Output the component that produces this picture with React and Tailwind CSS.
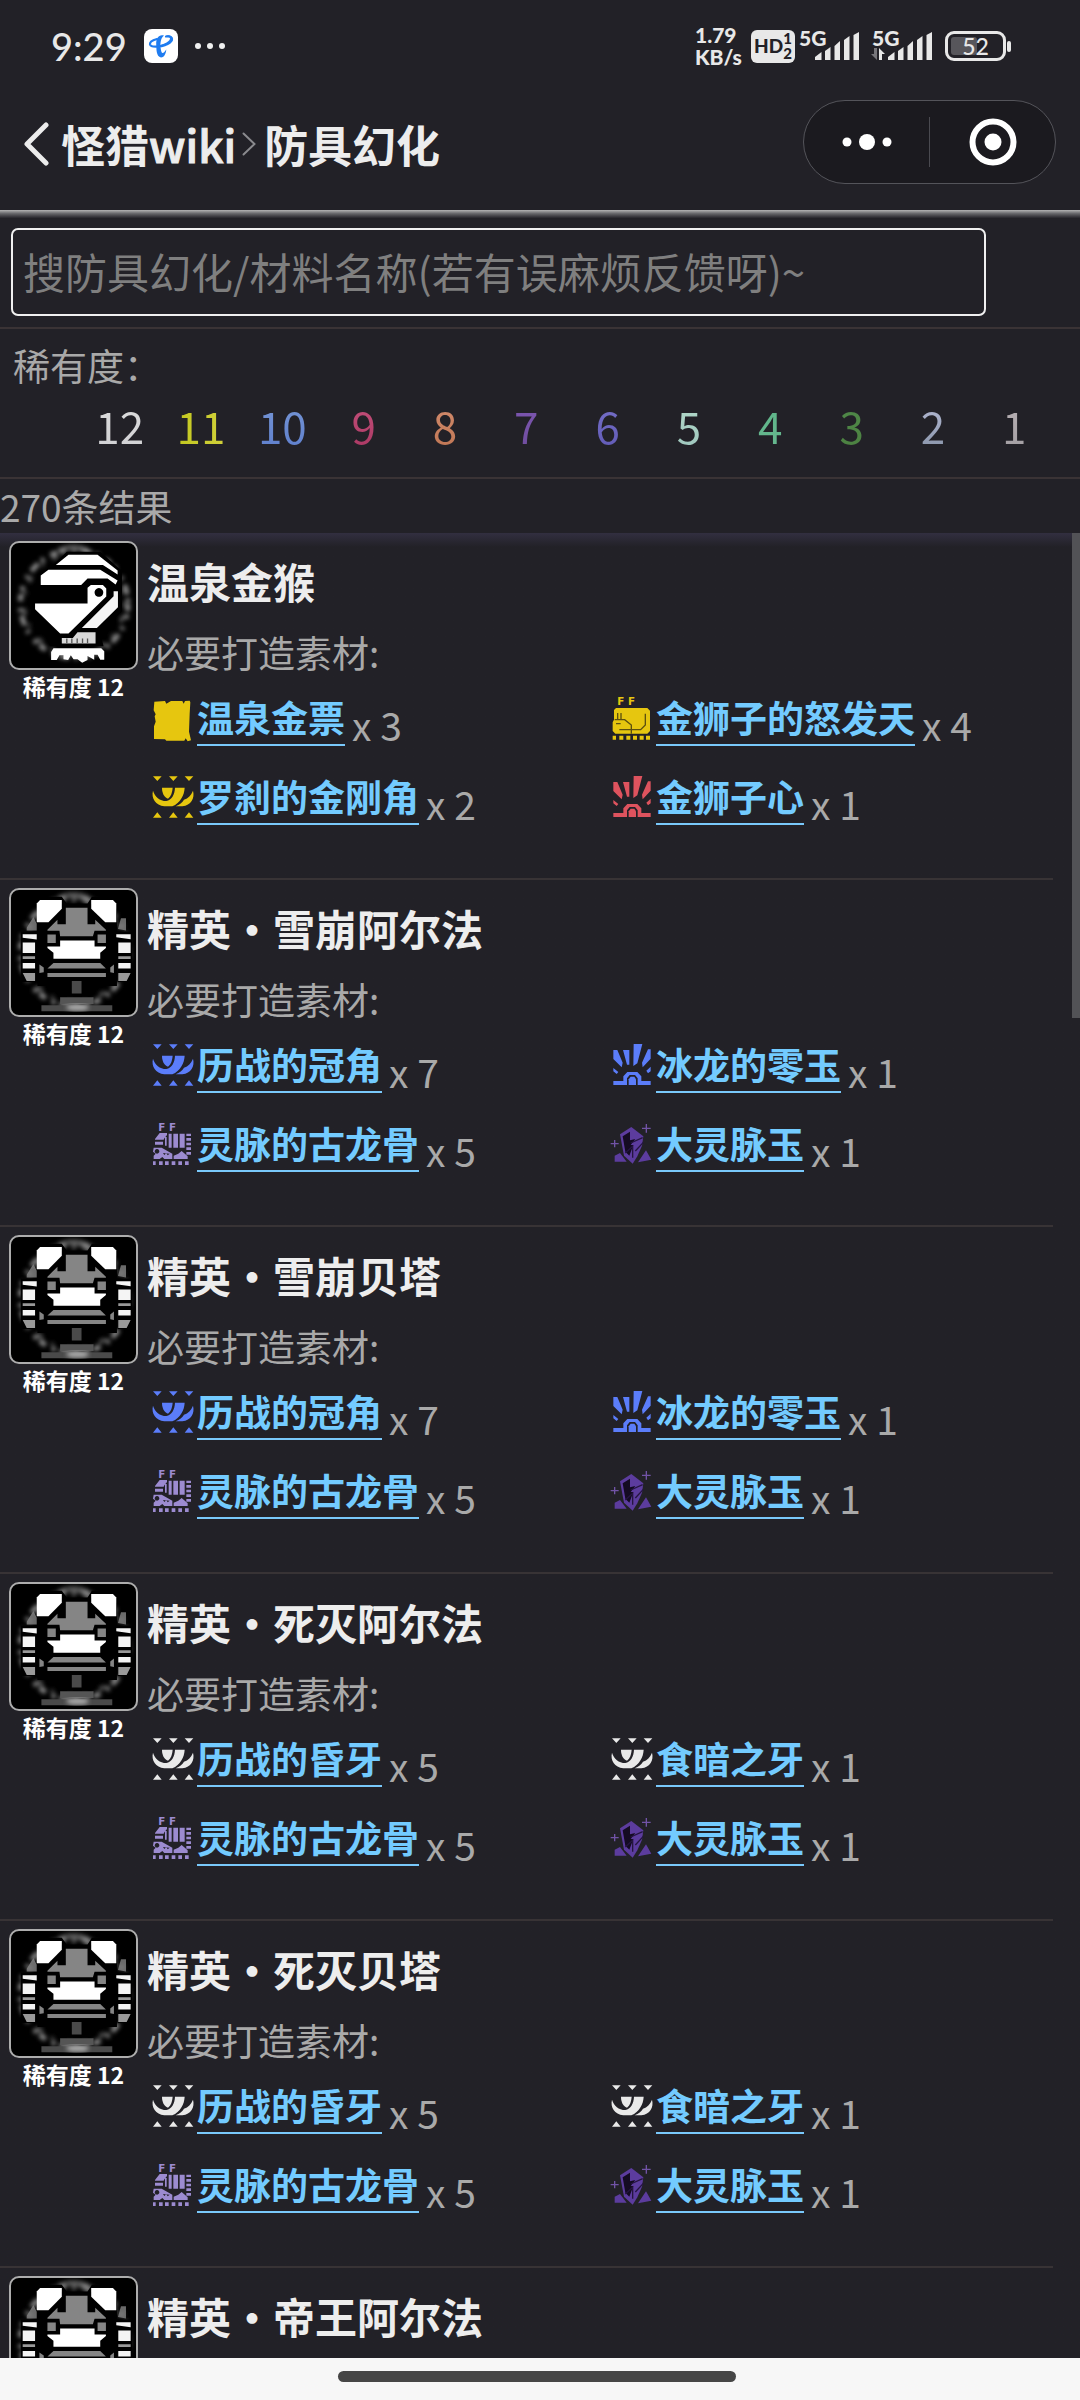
import React from "react";

const CJK = "font-['Noto_Sans_CJK_SC',sans-serif]";

function TelecomLogo() {
  return (
    <svg viewBox="0 0 34 34" className="size-[34px] shrink-0" aria-label="天翼">
      <rect width="34" height="34" rx="8" fill="#fff" />
      <path d="M13 10C9 11 5.500 13 6 15.500C7 19 20 18 26 13.500C30 10 27.500 6.500 22 7.500" fill="none" stroke="#1f7cf0" strokeWidth="2.200" strokeLinecap="round" />
      <path d="M21.500 6.500C27 5.500 30 8 28 12C25.500 16 14 19.500 8.500 17.500C14 17.500 23 14.500 25.500 11C27 8.500 25 7 21.500 6.500Z" fill="#1f7cf0" />
      <path d="M20 6.500C15 5 12 9 12.200 15C12.500 20 12 27.500 17 28.500C20.500 28.500 22 24 22.300 20.500C20.500 23 18.500 25.500 17.500 23C16 18 15.500 10 20 6.500Z" fill="#1f7cf0" />
    </svg>
  );
}

function Bars() {
  return (
    <svg viewBox="0 0 44 28" className="h-7 w-11" fill="#e8e8e8" aria-hidden="true">
      <path d="M0 25L6.500 20V28H0Z" />
      <path d="M10 19L15.500 15V28H10Z" />
      <path d="M19.500 14L25 9V28H19.500Z" />
      <path d="M29 8L34.500 4V28H29Z" />
      <path d="M38.500 3L44 0V28H38.500Z" />
    </svg>
  );
}

function StatusBar() {
  return (
    <div className="flex h-24 items-center justify-between pr-[69px] pb-1 pl-[51px] font-['Lato','Roboto',sans-serif] text-[#e8e8e8]">
      <div className="flex items-center">
        <span className="w-[93px] text-[38px] leading-10 font-medium">9:29</span>
        <TelecomLogo />
        <svg viewBox="0 0 30 6" className="ml-[17px] h-1.5 w-[30px]" fill="#f0f0f0" aria-hidden="true">
          <circle cx="3" cy="3" r="3" />
          <circle cx="15" cy="3" r="3" />
          <circle cx="27" cy="3" r="3" />
        </svg>
      </div>
      <div className="flex items-center">
        <div className="w-14 text-[21px] leading-[22px] font-black">
          <div>1.79</div>
          <div>KB/s</div>
        </div>
        <div className="flex h-[33px] w-[44px] items-center justify-center rounded-[6px] bg-[#e8e8e8] font-black text-[#222127]">
          <span className="text-[19px] leading-5">HD</span>
          <span className="text-[15px] leading-[15px]">
            <span className="block">1</span>
            <span className="block">2</span>
          </span>
        </div>
        <div className="relative ml-5 h-7 w-11">
          <Bars />
          <span className="absolute -top-1 -left-4 text-[21px] leading-5 font-black">5G</span>
        </div>
        <div className="relative ml-[29px] h-7 w-11">
          <Bars />
          <span className="absolute -top-1 -left-4 text-[21px] leading-5 font-black">5G</span>
          <svg viewBox="0 0 14 12" className="absolute -left-[17px] bottom-0 h-3 w-3.5" aria-hidden="true">
            <path d="M3 0H6V12L0 6H3Z" fill="#77767b" />
            <path d="M8 12H11V6H14L8 0Z" fill="#e8e8e8" />
          </svg>
        </div>
        <div className="ml-[13px] flex items-center gap-px">
          <div className="relative flex h-[30px] w-[61px] items-center justify-center rounded-[9px] border-[3px] border-[#e8e8e8]">
            <span className="absolute inset-y-[3px] left-[3px] w-[26px] rounded-[3px] bg-[#57565b]" />
            <span className="relative text-[23px] leading-6 font-medium">52</span>
          </div>
          <span className="h-[11px] w-1 rounded-[2px] bg-[#e8e8e8]" />
        </div>
      </div>
    </div>
  );
}

function TitleBar() {
  return (
    <header className="flex h-[114px] items-start justify-between pr-6 pl-6">
      <nav className="mt-[23px] flex items-center text-[44px] leading-[50px] font-bold text-[#ededed]">
        <button type="button" aria-label="返回" className="mr-3">
          <svg viewBox="0 0 25 44" className="h-11 w-[25px]" fill="none" stroke="#ececec" strokeWidth="5" strokeLinecap="round" strokeLinejoin="round">
            <path d="M22 3L3 22L22 41" />
          </svg>
        </button>
        <a href="#wiki">
          怪猎<span className="font-medium [-webkit-text-stroke:1px_#ededed]">wiki</span>
        </a>
        <svg viewBox="0 0 14 24" className="mr-2 ml-1.5 h-6 w-3.5" fill="none" stroke="#8a8a8e" strokeWidth="2" strokeLinecap="round" aria-hidden="true">
          <path d="M1.500 1.500L12.500 12L1.500 22.500" />
        </svg>
        <h1>防具幻化</h1>
      </nav>
      <div className="mt-1 flex h-[84px] w-[253px] items-center rounded-full border border-[#54545a] bg-[#1b1a1f]">
        <button type="button" aria-label="更多" className="flex h-full flex-1 items-center justify-center">
          <svg viewBox="0 0 50 16" className="h-4 w-[50px]" fill="#fff">
            <circle cx="5" cy="8" r="4.500" />
            <circle cx="25" cy="8" r="8" />
            <circle cx="45" cy="8" r="4.500" />
          </svg>
        </button>
        <span className="h-[50px] w-px bg-[#4a4a50]" />
        <button type="button" aria-label="关闭" className="flex h-full flex-1 items-center justify-center">
          <svg viewBox="0 0 48 48" className="size-12">
            <circle cx="24" cy="24" r="20.500" fill="none" stroke="#fff" strokeWidth="6" />
            <circle cx="24" cy="24" r="8.500" fill="#fff" />
          </svg>
        </button>
      </div>
    </header>
  );
}

const rarities = [
  ["12", "bg-linear-to-b from-[#dedede] to-[#cfcfd2]"],
  ["11", "bg-linear-to-r from-[#c3c81e] to-[#d0d03a]"],
  ["10", "bg-linear-to-b from-[#7a9ad6] to-[#5c7ccc]"],
  ["9", "bg-linear-to-b from-[#c8557f] to-[#a83460]"],
  ["8", "bg-linear-to-b from-[#d69072] to-[#bd7350]"],
  ["7", "bg-linear-to-b from-[#7f58b4] to-[#6e4c9c]"],
  ["6", "bg-linear-to-b from-[#7a74cc] to-[#5f58b4]"],
  ["5", "bg-linear-to-b from-[#b6dccb] to-[#9cc4bc]"],
  ["4", "bg-linear-to-b from-[#5cb487] to-[#68b890]"],
  ["3", "bg-linear-to-b from-[#4f8a4a] to-[#4c8040]"],
  ["2", "bg-linear-to-b from-[#bcc0dc] to-[#8490a4]"],
  ["1", "bg-linear-to-b from-[#bcb4b8] to-[#a09ca0]"],
];

function Halo({ cx, cy }) {
  return (
    <g fill="none" filter="url(#halo-blur)">
      <circle cx={cx} cy={cy} r="161" stroke="#8a8a8a" strokeWidth="15" strokeDasharray="22 10 13 26 9 17 30 12 11 21" />
      <circle cx={cx} cy={cy} r="150" stroke="#5a5a5a" strokeWidth="12" strokeDasharray="7 31 18 44" />
      <path d={`M${cx - 45} ${cy - 158}Q${cx} ${cy - 180} ${cx + 42} ${cy - 156}`} stroke="#8c8c8c" strokeWidth="18" strokeDasharray="9 6" />
    </g>
  );
}

function ApeHelm() {
  return (
    <svg viewBox="33 66 374 374" className="size-full" aria-hidden="true">
      <defs>
        <filter id="halo-blur">
          <feGaussianBlur stdDeviation="6" />
        </filter>
      </defs>
      <Halo cx={222} cy={248} />
      <g fill="#000">
        <path d="M150 140L200 92H300L365 150V270L300 335L310 375H150L95 260L112 160Z" />
      </g>
      <g fill="#fff">
        <path d="M167 132L205 101H292L352 148V160L308 132Z" />
        <path d="M122 192V163L145 146H300L352 178L346 190L322 172H262L243 192Z" />
        <path fillRule="evenodd" d="M105 247H262V200L272 192H308L318 202V226L205 337H180L105 264ZM296 201a13 13 0 1 0 .1 0Z" />
        <path d="M245 320L340 225V210H353V258L290 320Z" fill="#f4f4f4" />
        <path d="M185 350H218L232 333H286V367H185Z" fill="#d8d8d8" />
        <path d="M160 381H303L312 390V415H300L292 400H282V415L262 404V416L246 424L232 414H220L212 402L204 416L190 414V402H178L170 416H153V392Z" />
      </g>
      <path d="M200 352V366M215 352V366M231 352V366M247 352V366M262 352V366" stroke="#555" strokeWidth="4" />
    </svg>
  );
}

function EliteHelm() {
  return (
    <svg viewBox="33 60 374 371" className="size-full" preserveAspectRatio="none" aria-hidden="true">
      <Halo cx={222} cy={244} />
      <path d="M112 80H185L200 100H262L275 80H350V345H112Z" fill="#000" />
      <g fill="#fff">
        <path d="M110 156V100L120 90H185V116L145 156Z" />
        <path d="M348 156V100L338 90H273V116L315 156Z" />
        <path d="M180 210H283V228H317V232L300 246V264H160V246L142 232V228H180Z" />
      </g>
      <g fill="#858585">
        <path d="M197 113H262V162H285V148L317 178V181H283L278 197H180L178 181H142V178L172 148V162H197Z" />
        <path d="M142 192h25v25h-25zM292 192h25v25h-25z" />
        <path d="M160 277H300L317 293H142Z" />
        <path d="M142 306h175v12h-175z" />
        <path d="M118 281L131 290V304L118 306ZM341 281L330 290V304L341 306Z" />
        <path d="M100 140L110 160V180H80V172ZM362 144H377V180L353 176Z" opacity=".8" />
      </g>
      <g fill="#000">
        <path d="M62 183h48v150h-48zM352 183h44v150h-44z" />
      </g>
      <g fill="#f4f4f4">
        <path d="M68 191H110V207L68 202ZM68 216h37v31h-37zM68 277h37v16h-37z" />
        <path d="M391 191H348V200L391 206ZM354 216h37v31h-37zM354 277h37v16h-37z" />
      </g>
      <path d="M68 257h37v8h-37zM354 257h37v8h-37zM68 306h37v24h-25zM354 306h37l-12 24h-25z" fill="#999" />
      <path d="M215 330h29v37h-29z" fill="#4a4a4a" />
      <path d="M180 378h100v20h-100z" fill="#555" />
      <path d="M124 402h212v18h-212z" fill="#4a4a4a" />
      <ellipse cx="232" cy="408" rx="34" ry="10" fill="#aaa" filter="url(#halo-blur)" />
    </svg>
  );
}

function Fang() {
  return (
    <>
      <path d="M0 1H26L13 15ZM48 1H74L61 15ZM95 1H121L108 15Z" />
      <path d="M0 125L13 109L26 125ZM48 125L61 109L74 125ZM95 125L108 109L121 125Z" />
      <path d="M0 44C6 62 20 75 40 75C56 72 65 56 66 35H95C94 58 82 80 58 91H34C8 88-6 66 0 44Z" />
      <path d="M27 35H59C58 49 54 61 45 68C32 63 27 49 27 35Z" />
      <path d="M120 44C126 66 114 88 88 91H68C80 86 88 79 93 71C106 67 114 58 120 44Z" />
    </>
  );
}

function Ticket() {
  return (
    <path d="M4 14L36 12L40 20L54 12H88L92 20L96 12L110 11L112 16L110 50L108 104L114 130L104 133L98 124L94 131H40L36 127L3 126V88L8 74L5 58L8 52L2 40Z" />
  );
}

function FF() {
  return (
    <g fontSize="31" fontWeight="700" fontFamily="DejaVu Sans, sans-serif">
      <text x="16" y="23">F</text>
      <text x="48" y="23">F</text>
    </g>
  );
}

function Mane() {
  return (
    <>
      <FF />
      <path d="M12 33H106L114 41V102L106 110H10L2 102V76L6 68V39Z" />
      <path d="M17 48V66M27 48V66M8 68H38L58 84V110M12 80H26M100 50V84L86 98H22" fill="none" stroke="#5c5010" strokeWidth="4" />
      <path d="M2 116h10v12H2zM22 116h12v12H22zM43 116h12v12H43zM63 116h12v12H63zM83 116h12v12H83zM102 116h12v12h-12z" />
    </>
  );
}

function Bone() {
  return (
    <>
      <FF />
      <path d="M6 48L20 30H42V36L34 46L32 50H6ZM6 56H30V65H6Z" />
      <path d="M47 32h9v42h-9zM61 32h14v42H61zM80 32h15v42H80zM100 32h14v7h-14zM100 45h14v8h-14zM100 59h14v8h-14zM100 73h14v8h-14zM100 87h14v8h-14zM36 42h5v26h-5z" />
      <path fillRule="evenodd" d="M2 74H26L58 92V108H34L28 102L20 108H2V98L8 92L0 86ZM12 78a7 7 0 1 0 .1 0ZM30 90L34 96L40 90L44 97L50 92Z" />
      <path d="M62 98L76 92L86 84L104 100V108H62Z" />
      <path d="M0 115h8v11H0zM18 115h11v11H18zM36 115h11v11H36zM56 115h11v11H56zM76 115h11v11H76zM96 115h11v11H96z" />
    </>
  );
}

function Burst() {
  return (
    <g>
      <path d="M65 0H91L76 58L64 66ZM33 18H52V62L45 62ZM4 18H16L32 56L29 70L4 45ZM116 16H108L90 56L92 70L116 44Z" />
      <path d="M4 72L19 84L14 90L4 82ZM116 68L103 80L108 88L116 82Z" />
      <path fillRule="evenodd" d="M4 111H34V97L46 84H76L88 97V111H116V123H4ZM45 123V103L53 93H69L77 103V123Z" />
      <path d="M50 123V106L56 98H67L72 106V123Z" />
    </g>
  );
}

function Gem() {
  return (
    <g>
      <path d="M24 34L58 12L94 40L90 68L76 100L62 122L36 98Z" />
      <path d="M32 40L54 26V52L70 48L56 66L64 66L52 98L40 86Z" fill="#140b22" />
      <path d="M92 44L56 60M94 58L70 84M40 90L62 70V104" stroke="#251540" strokeWidth="4" fill="none" />
      <path d="M8 98L24 90L44 116H8ZM102 82L118 110L78 118Z" />
      <path d="M-4 62H20M8 51V73M90 16H116M103 3V29" stroke="#7153a6" strokeWidth="4" fill="none" />
    </g>
  );
}

const shapes = { fang: Fang, ticket: Ticket, mane: Mane, bone: Bone, burst: Burst, gem: Gem };

function MaterialIcon({ shape, color }) {
  const Shape = shapes[shape];
  return (
    <svg viewBox="0 0 126 129" className="mt-0.5 mr-0.5 h-[43px] w-[42px] shrink-0 self-start overflow-visible" fill={color} aria-hidden="true">
      <Shape />
    </svg>
  );
}

const gold = "#e6c60f";
const blue = "#5b7dfa";
const white = "#e9e9e9";
const violet = "#9c8bd0";
const purple = "#5c3c9e";

const crown = ["fang", blue, "历战的冠角", 7];
const iceGem = ["burst", blue, "冰龙的零玉", 1];
const oldBone = ["bone", violet, "灵脉的古龙骨", 5];
const bigGem = ["gem", purple, "大灵脉玉", 1];
const duskFang = ["fang", white, "历战的昏牙", 5];
const eclipseFang = ["fang", white, "食暗之牙", 1];

const armors = [
  {
    name: "温泉金猴",
    Helm: ApeHelm,
    materials: [
      ["ticket", gold, "温泉金票", 3],
      ["mane", gold, "金狮子的怒发天", 4],
      ["fang", gold, "罗刹的金刚角", 2],
      ["burst", "#de535e", "金狮子心", 1],
    ],
  },
  { name: "精英・雪崩阿尔法", Helm: EliteHelm, materials: [crown, iceGem, oldBone, bigGem] },
  { name: "精英・雪崩贝塔", Helm: EliteHelm, materials: [crown, iceGem, oldBone, bigGem] },
  { name: "精英・死灭阿尔法", Helm: EliteHelm, materials: [duskFang, eclipseFang, oldBone, bigGem] },
  { name: "精英・死灭贝塔", Helm: EliteHelm, materials: [duskFang, eclipseFang, oldBone, bigGem] },
  { name: "精英・帝王阿尔法", Helm: EliteHelm, materials: null },
];

function ArmorItem({ name, Helm, materials }) {
  return (
    <li className="flex gap-[9px] border-b-2 border-[#383335] pl-[9px]">
      <div className="w-[129px] shrink-0 pt-2">
        <div className="h-[129px] overflow-hidden rounded-[10px] border-2 border-[#adadad] bg-black">
          <Helm />
        </div>
        {materials && <p className="text-center text-[23px] leading-8 font-bold text-white">稀有度 12</p>}
      </div>
      <div className="min-w-0 flex-1 pt-5 pb-[51px]">
        <h2 className="text-[42px] leading-[56px] font-bold text-[#ededed]">{name}</h2>
        {materials && (
          <>
            <p className="pt-[21px] text-[37px] leading-[44px]">必要打造素材:</p>
            <ul className="grid grid-cols-[51%_49%] gap-y-[26px] pt-[21px] pl-1.5">
              {materials.map(([shape, color, label, count]) => (
                <li key={label} className="flex h-[53px] items-end whitespace-nowrap">
                  <MaterialIcon shape={shape} color={color} />
                  <a href={"#" + label} className="mb-0.5 h-[51px] border-b-2 border-[#79c8fa] text-[37px] leading-[44px] font-bold text-[#73cbff]">
                    {label}
                  </a>
                  <span className="mb-1 ml-[7px] text-[39px] leading-10">x {count}</span>
                </li>
              ))}
            </ul>
          </>
        )}
      </div>
    </li>
  );
}

export default function App() {
  return (
    <div className={`flex h-screen flex-col overflow-hidden bg-[#222127] text-[#a9a9a9] ${CJK}`}>
      <StatusBar />
      <TitleBar />
      <div className="h-3 shrink-0 bg-linear-to-b from-[#b4b4b4] via-[#66666a] via-30% to-[#222127] to-70%" />
      <form className="border-b-2 border-[#3a3335] pt-1.5 pr-[94px] pb-[11px] pl-[11px]" role="search">
        <input
          type="text"
          aria-label="搜索防具幻化"
          placeholder="搜防具幻化/材料名称(若有误麻烦反馈呀)~"
          className="block h-[88px] w-full rounded-[7px] border-2 border-[#f0f0f0] bg-transparent px-2.5 pb-1 text-[42px] text-[#ededed] outline-none placeholder:text-[#7f7f7f]"
        />
      </form>
      <section className="border-b-2 border-[#3a3335] pt-3.5">
        <h2 className="pl-[13px] text-[37px] leading-[44px]">稀有度：</h2>
        <div className="grid grid-cols-12 pt-1.5 pr-[25px] pb-5 pl-[79px]">
          {rarities.map(([label, tone]) => (
            <button key={label} type="button" className="text-center text-[44px] leading-[64px] font-normal">
              <span className={`bg-clip-text text-transparent ${tone}`}>{label}</span>
            </button>
          ))}
        </div>
      </section>
      <p className="h-[54px] shrink-0 pt-[3px] text-[37px] leading-[48px]">270条结果</p>
      <main className="relative min-h-0 flex-1 overflow-hidden bg-linear-to-b from-[#322f40] to-[#222127] to-[14px]">
        <ul className="pr-[27px]">
          {armors.map((armor) => (
            <ArmorItem key={armor.name} {...armor} />
          ))}
        </ul>
        <div className="absolute top-0 right-0 h-[485px] w-2 bg-[#525256]" />
      </main>
      <footer className="flex h-[42px] shrink-0 justify-center bg-[#f7f7f7] pt-[13px] pr-1.5">
        <div className="h-[11px] w-[37%] rounded-full bg-[#464646]" />
      </footer>
    </div>
  );
}
